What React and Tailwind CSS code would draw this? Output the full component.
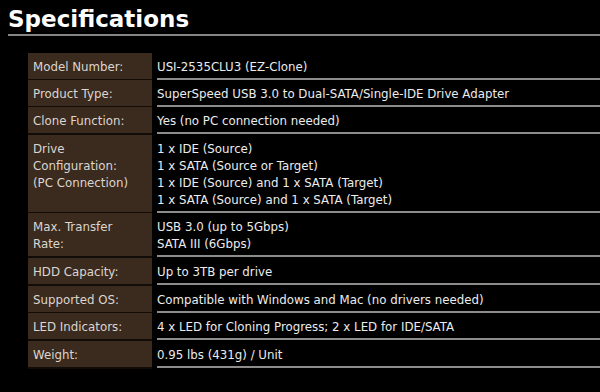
import React from "react";

const specs = [
  { label: ["Model Number:"], value: ["USI-2535CLU3 (EZ-Clone)"] },
  { label: ["Product Type:"], value: ["SuperSpeed USB 3.0 to Dual-SATA/Single-IDE Drive Adapter"] },
  { label: ["Clone Function:"], value: ["Yes (no PC connection needed)"], tall: true },
  {
    label: ["Drive", "Configuration:", "(PC Connection)"],
    value: [
      "1 x IDE (Source)",
      "1 x SATA (Source or Target)",
      "1 x IDE (Source) and 1 x SATA (Target)",
      "1 x SATA (Source) and 1 x SATA (Target)",
    ],
  },
  { label: ["Max. Transfer", "Rate:"], value: ["USB 3.0 (up to 5Gbps)", "SATA III (6Gbps)"], tall: true },
  { label: ["HDD Capacity:"], value: ["Up to 3TB per drive"], tall: true },
  { label: ["Supported OS:"], value: ["Compatible with Windows and Mac (no drivers needed)"] },
  { label: ["LED Indicators:"], value: ["4 x LED for Cloning Progress; 2 x LED for IDE/SATA"], tall: true },
  { label: ["Weight:"], value: ["0.95 lbs (431g) / Unit"] },
];

const App = () => {
  return (
    <div className="w-[600px] h-[392px] overflow-hidden bg-black font-['DejaVu_Sans',sans-serif]">
      {/* Заголовок */}
      <h1 className="ml-[8px] pt-[6px] text-[23px] leading-[27px] font-bold text-white">Specifications</h1>
      <div className="ml-[8px] mt-[1px] h-[2px] bg-[#858585]" />

      {/* Таблица */}
      <div className="ml-[28px] mt-[17px] flex flex-col">
        {specs.map((row, i) => (
          <div key={i} className={`flex ${row.tall ? "pb-[1px]" : ""}`}>
            <div className="w-[124px] -mb-[1px] bg-[#3b2a1e] border-b-2 border-[#120c08] pl-[5px] pt-[6px] pb-[2px] text-[11.8px] leading-[17px] text-[#dcd6d0]">
              {row.label.map((l, j) => (
                <div key={j}>{l}</div>
              ))}
            </div>
            <div className="flex-1 ml-[5px] border-b-2 border-[#8c8c8c] pt-[6px] pb-[2px] text-[11.8px] leading-[17px] text-[#ececec]">
              {row.value.map((v, j) => (
                <div key={j}>{v}</div>
              ))}
            </div>
          </div>
        ))}
      </div>
    </div>
  );
};

export default App;
